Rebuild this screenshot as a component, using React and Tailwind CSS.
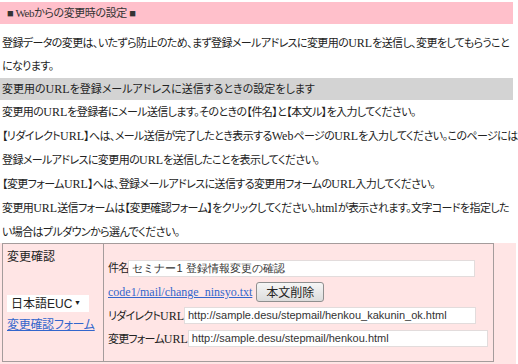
const lines = [
  "変更用のURLを登録者にメール送信します。そのときの【件名】と【本文ル】を入力してください。",
  "【リダイレクトURL】へは、メール送信が完了したとき表示するWebページのURLを入力してください。このページには",
  "登録メールアドレスに変更用のURLを送信したことを表示してください。",
  "【変更フォームURL】へは、登録メールアドレスに送信する変更用フォームのURL入力してください。",
  "変更用URL送信フォームは【変更確認フォーム】をクリックしてください。htmlが表示されます。文字コードを指定した",
  "い場合はプルダウンから選んでください。",
];

// latin words come out in the serif face and look a bit bigger than the kana
function T({ children }) {
  return children.split(/([A-Za-z]+)/).map((part, i) =>
    /^[A-Za-z]+$/.test(part) ? (
      <span key={i} className="text-[12px] tracking-normal">
        {part}
      </span>
    ) : (
      part
    ),
  );
}

function Row({ label, value, width, className = "" }) {
  return (
    <div className={`flex items-center h-[17px] ${width} ${className}`}>
      <span className="whitespace-nowrap tracking-[-0.8px]">
        <T>{label}</T>
      </span>
      <div className="flex-1 h-[17px] bg-white border border-[#e2dcdc] flex items-center px-[3px] font-['Liberation_Sans',Arial,sans-serif] text-[11px] tracking-normal text-[#333] whitespace-nowrap overflow-hidden">
        {value}
      </div>
    </div>
  );
}

export default function App() {
  return (
    <div className="w-[518px] h-[364px] overflow-hidden bg-white text-[#222] text-[11px] tracking-[-0.6px] font-['Liberation_Serif','Noto_Sans_CJK_JP',serif] [font-feature-settings:'palt']">
      <div className="mt-[2px] h-[22px] w-[513px] bg-[#ffc0cb] flex items-center pl-[7px] text-[11px] tracking-[-0.4px] text-[#333]">
        ■ Webからの変更時の設定 ■
      </div>

      <p className="mt-[8px] pl-[2px] leading-[23px] whitespace-nowrap">
        <T>登録データの変更は、いたずら防止のため、まず登録メールアドレスに変更用のURLを送信し、変更をしてもらうこと</T>
        <br />
        になります。
      </p>

      <div className="h-[22px] w-[513px] bg-[#d3d3d3] flex items-center pl-[2px] whitespace-nowrap tracking-normal">
        <T>変更用のURLを登録メールアドレスに送信するときの設定をします</T>
      </div>

      <div className="pl-[2px] leading-[24px] whitespace-nowrap">
        {lines.map((l) => (
          <div key={l} className="h-[24px]">
            <T>{l}</T>
          </div>
        ))}
      </div>

      <div className="-mt-[1px] w-[516px] h-[122px] bg-[#ffe5e5] pl-[2px]">
        <div className="w-[492px] h-[119px] border border-[#a59c9c] flex">
          <div className="w-[101px] border-r border-[#a59c9c] pl-[4px] pt-[6px] flex flex-col">
            <div className="leading-[14px] text-[12px] tracking-normal">変更確認</div>
            <div className="mt-[31px] w-[82px] h-[17px] bg-white flex items-center justify-between pl-[4px] pr-[8px] font-['Liberation_Sans','Noto_Sans_CJK_JP',sans-serif] text-[12px] tracking-normal text-[#222]">
              <span>日本語EUC</span>
              <span className="text-[7px]">▼</span>
            </div>
            <a className="mt-[6px] leading-[14px] text-[12px] text-[#3366cc] underline whitespace-nowrap tracking-[-0.3px]">
              変更確認フォーム
            </a>
          </div>

          <div className="flex-1 pl-[4px] pt-[16px] flex flex-col">
            <Row width="w-[367px]" label="件名" value="セミナー1 登録情報変更の確認" />
            <div className="mt-[5px] flex items-center h-[20px]">
              <a className="text-[12px] tracking-normal text-[#3366cc] underline whitespace-nowrap">
                code1/mail/change_ninsyo.txt
              </a>
              <button className="ml-[4px] h-[20px] w-[68px] rounded-[3px] border border-[#8f8f8f] bg-gradient-to-b from-[#f6f6f6] to-[#dcdcdc] text-[12px] tracking-normal font-['Noto_Sans_CJK_JP',sans-serif] text-[#222]">
                本文削除
              </button>
            </div>
            <Row className="mt-[5px]" width="w-[368px]" label="リダイレクトURL" value="http://sample.desu/stepmail/henkou_kakunin_ok.html" />
            <Row className="mt-[6px]" width="w-[380px]" label="変更フォームURL" value="http://sample.desu/stepmail/henkou.html" />
          </div>
        </div>
      </div>
    </div>
  );
}
